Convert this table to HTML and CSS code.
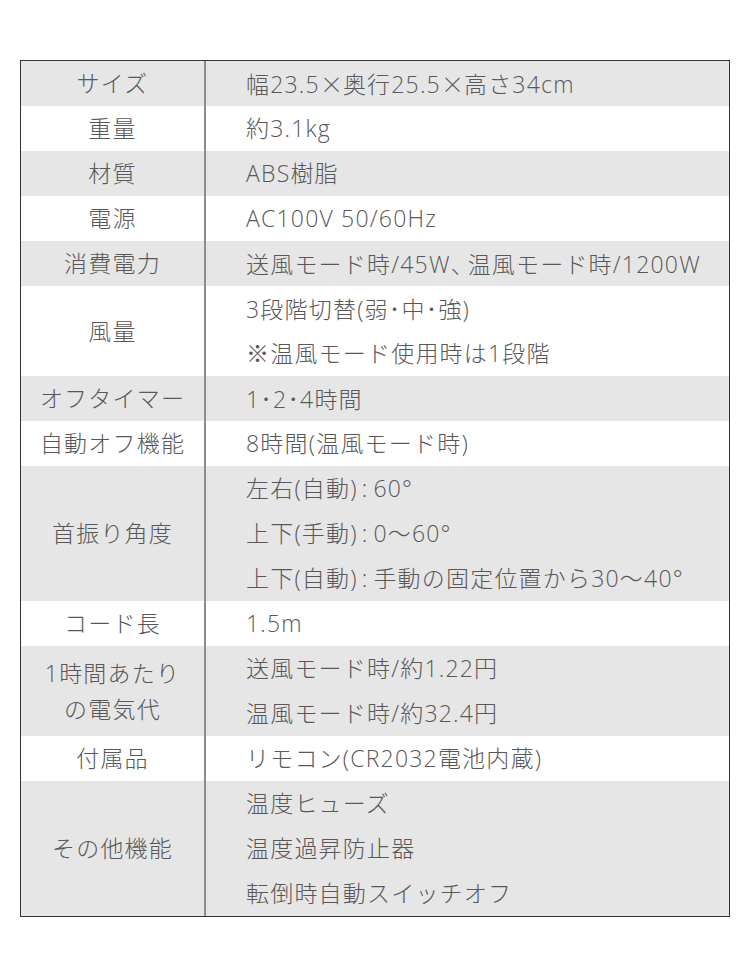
FILE: index.html
```html
<!DOCTYPE html>
<html lang="ja">
<head>
<meta charset="utf-8">
<link rel="stylesheet" href="styles.css">
</head>
<body>
<div class="spec">
  <div class="row gray"><div class="label">サイズ</div><div class="value"><p>幅23.5<span class="x">×</span>奥行25.5<span class="x">×</span>高さ34cm</p></div></div>
  <div class="row"><div class="label">重量</div><div class="value"><p>約3.1kg</p></div></div>
  <div class="row gray"><div class="label">材質</div><div class="value"><p>ABS樹脂</p></div></div>
  <div class="row"><div class="label">電源</div><div class="value"><p>AC100V 50/60Hz</p></div></div>
  <div class="row gray"><div class="label">消費電力</div><div class="value"><p>送風モード時/45W<span class="comma">、</span>温風モード時/1200W</p></div></div>
  <div class="row"><div class="label">風量</div><div class="value"><p>3段階切替(弱<span class="dot">･</span>中<span class="dot">･</span>強)</p><p>※温風モード使用時は1段階</p></div></div>
  <div class="row gray"><div class="label">オフタイマー</div><div class="value"><p>1<span class="dot">･</span>2<span class="dot">･</span>4時間</p></div></div>
  <div class="row"><div class="label">自動オフ機能</div><div class="value"><p>8時間(温風モード時)</p></div></div>
  <div class="row gray"><div class="label">首振り角度</div><div class="value"><p>左右(自動)<span class="colon">:</span>60°</p><p>上下(手動)<span class="colon">:</span>0～60°</p><p>上下(自動)<span class="colon">:</span>手動の固定位置から30～40°</p></div></div>
  <div class="row"><div class="label">コード長</div><div class="value"><p>1.5m</p></div></div>
  <div class="row gray"><div class="label label-2">1時間あたり<br>の電気代</div><div class="value"><p>送風モード時/約1.22円</p><p>温風モード時/約32.4円</p></div></div>
  <div class="row"><div class="label">付属品</div><div class="value"><p>リモコン(CR2032電池内蔵)</p></div></div>
  <div class="row gray"><div class="label">その他機能</div><div class="value"><p>温度ヒューズ</p><p>温度過昇防止器</p><p>転倒時自動スイッチオフ</p></div></div>
</div>
</body>
</html>
```
FILE: styles.css
```css
* { box-sizing: border-box; }
html, body { margin: 0; padding: 0; background: #fff; }
body {
  font-family: "Open Sans", "Noto Sans CJK JP", sans-serif;
  font-weight: 200;
  color: #585858;
  font-size: 23px;
  letter-spacing: 1.2px;
}
.spec {
  margin: 60px 0 0 20px;
  width: 710px;
  border: 1px solid #333;
}
.row {
  display: grid;
  grid-template-columns: 185px 1fr;
  background: #fff;
}
.row.gray { background: #e6e6e6; }
.label {
  display: flex;
  align-items: center;
  justify-content: center;
  text-align: center;
  border-right: 2px solid #8c8c8c;
  line-height: 45px;
}
.label-2 { line-height: 36px; }
.value { padding-left: 40px; }
.value p {
  margin: 0;
  height: 45px;
  line-height: 45px;
  white-space: nowrap;
}
.x { font-family: "Noto Sans CJK JP", sans-serif; font-size: 23px; letter-spacing: 0; }
.dot { font-family: "Noto Sans CJK JP", sans-serif; }
.colon { margin: 0 5px 0 4px; }
.comma { font-family: "Noto Sans CJK JP", sans-serif; letter-spacing: -6px; }
```
